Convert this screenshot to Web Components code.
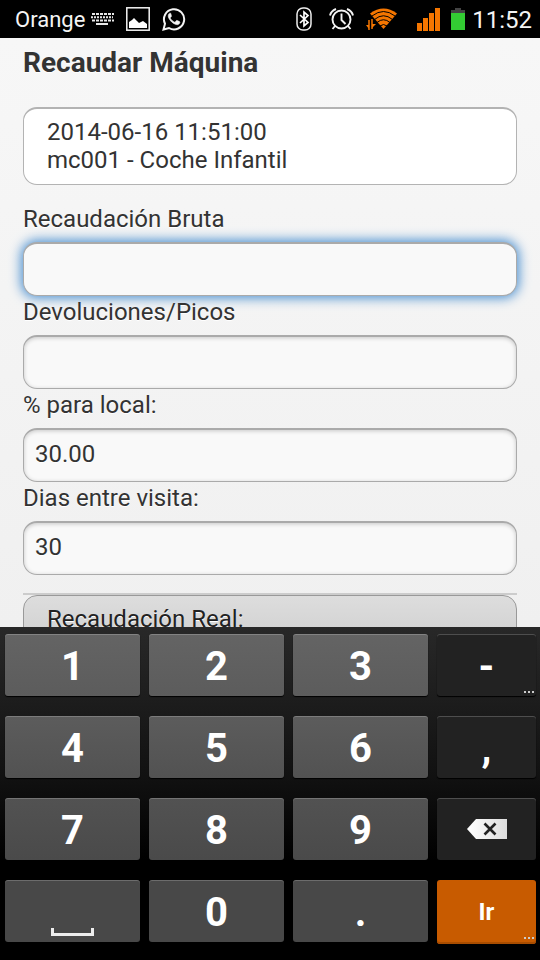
<!DOCTYPE html>
<html lang="es">
<head>
<meta charset="utf-8">
<meta name="viewport" content="width=device-width, initial-scale=1">
<title>Recaudar Máquina</title>
<style>
  html, body { margin: 0; height: 100%; }
  body { font-family: Roboto, "Noto Sans", sans-serif; font-size: 24px; line-height: 28px; color: #333; background: #000; }
</style>
</head>
<body>
<phone-screen>
  <status-bar slot="status" carrier="Orange" time="11:52"></status-bar>
  <collect-form></collect-form>
  <number-pad slot="keyboard"></number-pad>
</phone-screen>

<script>
class BaseElement extends HTMLElement {
  render(html) {
    if (!this.shadowRoot) this.attachShadow({ mode: "open" });
    this.shadowRoot.innerHTML = html;
  }
}

customElements.define("phone-screen", class extends BaseElement {
  connectedCallback() {
    this.render(`
      <style>
        :host { display: flex; flex-direction: column; height: 100vh; overflow: hidden; }
        main { flex: 1; min-height: 0; overflow: hidden; background: linear-gradient(#f7f7f7, #f0f0f0); }
      </style>
      <slot name="status"></slot>
      <main><slot></slot></main>
      <slot name="keyboard"></slot>`);
  }
});

customElements.define("status-bar", class extends BaseElement {
  connectedCallback() {
    this.render(`
      <style>
        :host { display: flex; align-items: center; justify-content: space-between; background: #000; color: #f4f4f4; padding: 0 8px 0 15px; height: 38px; flex: none; }
        div { display: flex; align-items: center; }
        svg { display: block; flex: none; }
        .carrier { font-size: 22px; margin-right: 6px; padding-top: 2px; }
        .time { font-size: 24px; margin-left: 7px; padding-top: 2px; }
        .keys { margin-right: 12px; }
        .photo { margin-right: 12px; }
        .bt { margin-right: 17px; }
        .alarm { margin-right: 12px; }
        .wifi { margin-right: 19px; }
        .signal { margin-right: 11px; }
      </style>
      <div>
        <span class="carrier">${this.getAttribute("carrier")}</span>
        <svg class="keys" width="23" height="12" viewBox="0 0 23 12" aria-hidden="true">
          <g stroke="#e8e8e8" stroke-width="2" fill="none">
            <path d="M1 1h22" stroke-dasharray="3 1"/><path d="M0 4.300h22" stroke-dasharray="2 1"/>
            <path d="M1 7.500h22" stroke-dasharray="3 1"/><path d="M5 11h12"/>
          </g>
        </svg>
        <svg class="photo" width="24" height="24" viewBox="0 0 24 24" aria-hidden="true">
          <rect x="0.800" y="0.800" width="22.400" height="22.400" fill="#000" stroke="#f4f4f4" stroke-width="1.500"/>
          <path d="M3 21v-6l3-2 2-2 3 3 2 2 4-2 4 3v4z" fill="#fff"/>
        </svg>
        <svg width="24" height="24" viewBox="0 0 24 24" aria-hidden="true">
          <path d="M1.500 22.500l1.500-5.800A10.100 10.100 0 1 1 7 21z" fill="none" stroke="#f4f4f4" stroke-width="2"/>
          <path d="M8.700 6.300c-.6-.3-1.200-.2-1.700.5-1 1.300-1.200 3 .3 5.200 1.700 2.700 3.900 4.700 6.800 5.500 1.800.5 3.300-.3 3.700-1.700.2-.7.100-1-.3-1.200l-2.300-1.100c-.5-.2-.7 0-1 .3l-.9 1.100c-.3.300-.6.300-1 .1-1.700-.8-3-2-3.900-3.600-.2-.3-.1-.6.100-.8l.8-1c.2-.3.200-.5.100-.9z" fill="#f4f4f4" stroke="#f4f4f4" stroke-width="0.600"/>
        </svg>
      </div>
      <div>
        <svg class="bt" width="16" height="24" viewBox="0 0 16 24" aria-hidden="true">
          <rect x="1" y="1" width="14" height="22" rx="6" fill="#000" stroke="#eee" stroke-width="1.500"/>
          <path d="M4 8l8 7.500L8 19V5l4 3.500L4 16" fill="none" stroke="#fff" stroke-width="1.700"/>
        </svg>
        <svg class="alarm" width="25" height="24" viewBox="0 0 25 24" aria-hidden="true">
          <g fill="none" stroke="#f4f4f4" stroke-width="1.900">
            <circle cx="12.500" cy="12.500" r="9"/><path d="M12.500 6.500v6.500l4 4"/>
            <path d="M1 8.500Q2 4 7 2M24 8.500Q23 4 18 2M6 19l-2.500 3M19 19l2.500 3"/>
          </g>
        </svg>
        <svg class="wifi" width="32" height="22" viewBox="0 0 32 22" aria-hidden="true">
          <path d="M4 5.500Q17.500-4.500 31 5.500L17.500 21z" fill="#f57600"/>
          <g fill="none" stroke="#000" stroke-width="1"><path d="M6 8Q17.500-1 29 8M8.500 11.500Q17.500 4 26.500 11.500M11 14.500Q17.500 9 24 14.500M14 18Q17.500 15 21 18"/></g>
          <path d="M3 12v10M6 11v10" stroke="#f57600" stroke-width="1.500"/>
          <path d="M0 17h3v4zM6 20v-4h4z" fill="#f57600"/>
        </svg>
        <svg class="signal" width="23" height="23" viewBox="0 0 23 23" aria-hidden="true">
          <path d="M0 15h5v8H0zM6 10h5v13H6zM12 5h5v18h-5zM18 0h5v23h-5z" fill="#f57600"/>
        </svg>
        <svg width="14" height="22" viewBox="0 0 14 22" aria-hidden="true">
          <path d="M4 0h6v2h4v3H0V2h4z" fill="#444"/><path d="M0 5h14v17H0z" fill="#33cc33"/>
        </svg>
        <span class="time">${this.getAttribute("time")}</span>
      </div>`);
  }
});

customElements.define("form-field", class extends BaseElement {
  connectedCallback() {
    this.render(`
      <style>
        :host { display: block; }
        label { display: block; margin-bottom: 9px; padding-top: 2px; text-shadow: 0 1px 0 #fff; }
        input { display: block; box-sizing: border-box; width: 100%; height: 54px; margin: 0; padding: 0 11px 4px; font: inherit; color: #333; background: #f9f9f9; border: 1px solid #aaa; border-top-width: 2px; border-radius: 14px; box-shadow: inset 0 1px 4px rgba(0,0,0,.2); outline: none; text-shadow: 0 1px 0 #fff; }
        :host([active]) input { box-shadow: 0 0 12px 2px #4a8fd0; }
      </style>
      <label for="field">${this.getAttribute("label")}</label>
      <input id="field" type="text" inputmode="decimal" value="${this.getAttribute("value") || ""}">`);
  }
});

customElements.define("info-card", class extends BaseElement {
  connectedCallback() {
    this.render(`
      <style>
        :host { display: block; box-sizing: border-box; border: 1px solid #b3b3b3; border-top-width: 2px; border-radius: 14px; background: #fff; padding: 9px 23px 10px; }
        :host([shaded]) { border: 1px solid #999; background: linear-gradient(#ddd, #d0d0d0); color: #222; text-shadow: 0 1px 0 #fff; }
      </style>
      <slot></slot>`);
  }
});

customElements.define("collect-form", class extends BaseElement {
  connectedCallback() {
    this.render(`
      <style>
        :host { display: block; padding: 9px 23px 0; }
        h1 { margin: 0 0 28px; font-size: 28px; line-height: 32px; font-weight: 700; text-shadow: 0 1px 0 #fff; }
        .fields { margin-top: 18px; }
        hr { margin: 18px 0 0; border: 0; border-top: 2px solid #ccc; }
      </style>
      <h1>Recaudar Máquina</h1>
      <info-card><div>2014-06-16 11:51:00</div><div>mc001 - Coche Infantil</div></info-card>
      <form class="fields">
        <form-field active label="Recaudación Bruta"></form-field>
        <form-field label="Devoluciones/Picos"></form-field>
        <form-field label="% para local:" value="30.00"></form-field>
        <form-field label="Dias entre visita:" value="30"></form-field>
      </form>
      <hr>
      <info-card shaded><div>Recaudación Real:</div></info-card>`);
  }
});

customElements.define("pad-key", class extends BaseElement {
  connectedCallback() {
    this.render(`
      <style>
        :host { display: block; }
        button { position: relative; display: flex; align-items: center; justify-content: center; width: 100%; height: 62px; margin: 0; padding: 4px 0 0; border: 0; border-radius: 3px; font: 700 40px/44px Roboto, "Noto Sans", sans-serif; color: #fff; background: var(--key, #555); box-shadow: inset 0 1px 0 rgba(255,255,255,.2), 0 1px 1px #000; }
        :host([dark]) button { background: #222; }
        :host([go]) button { background: #c85b00; height: 64px; padding: 0; font-size: 24px; box-shadow: inset 0 -2px 0 #a94d00; }
        :host([icon]) button { padding: 0; }
        :host([space]) button { align-items: flex-end; padding: 0 0 6px; }
        i { display: none; position: absolute; right: 2px; bottom: 3px; width: 10px; height: 2px; background: repeating-linear-gradient(90deg, #ccc 0 2px, transparent 2px 4px); }
        :host([more]) i { display: block; }
        :host([go]) i { bottom: 5px; }
      </style>
      <button type="button" ${this.title ? `aria-label="${this.title}"` : ""}><slot></slot><i></i></button>`);
  }
});

customElements.define("number-pad", class extends BaseElement {
  connectedCallback() {
    this.render(`
      <style>
        :host { display: grid; flex: none; grid-template-columns: 135fr 135fr 135fr 99fr; grid-auto-rows: 62px; gap: 20px 9px; padding: 7px 4px 18px 5px; background: linear-gradient(#282828, #111 45%, #000 70%); }
        svg { display: block; }
        .r1 { --key: linear-gradient(#646464, #5c5c5c); }
        .r2 { --key: linear-gradient(#5c5c5c, #525252); }
        .r3 { --key: linear-gradient(#525252, #4a4a4a); }
        .r4 { --key: #484848; }
      </style>
      <pad-key class="r1">1</pad-key><pad-key class="r1">2</pad-key><pad-key class="r1">3</pad-key><pad-key dark more>-</pad-key>
      <pad-key class="r2">4</pad-key><pad-key class="r2">5</pad-key><pad-key class="r2">6</pad-key><pad-key dark>,</pad-key>
      <pad-key class="r3">7</pad-key><pad-key class="r3">8</pad-key><pad-key class="r3">9</pad-key>
      <pad-key dark icon title="Borrar">
        <svg width="40" height="20" viewBox="0 0 40 20" aria-hidden="true">
          <defs><linearGradient id="g"><stop stop-color="#fff"/><stop offset="1" stop-color="#ddd"/></linearGradient></defs>
          <path d="M0 10L9 0h31v20H9z" fill="url(#g)"/><path d="M17.500 4.500l11 11M28.500 4.500l-11 11" stroke="#222" stroke-width="2.600"/>
        </svg>
      </pad-key>
      <pad-key class="r4" space title="Espacio">
        <svg width="43" height="8" viewBox="0 0 43 8" aria-hidden="true"><path d="M1.500 0v6.500h40V0" fill="none" stroke="#eee" stroke-width="3"/></svg>
      </pad-key>
      <pad-key class="r4">0</pad-key><pad-key class="r4">.</pad-key><pad-key go more>Ir</pad-key>`);
  }
});
</script>
</body>
</html>
